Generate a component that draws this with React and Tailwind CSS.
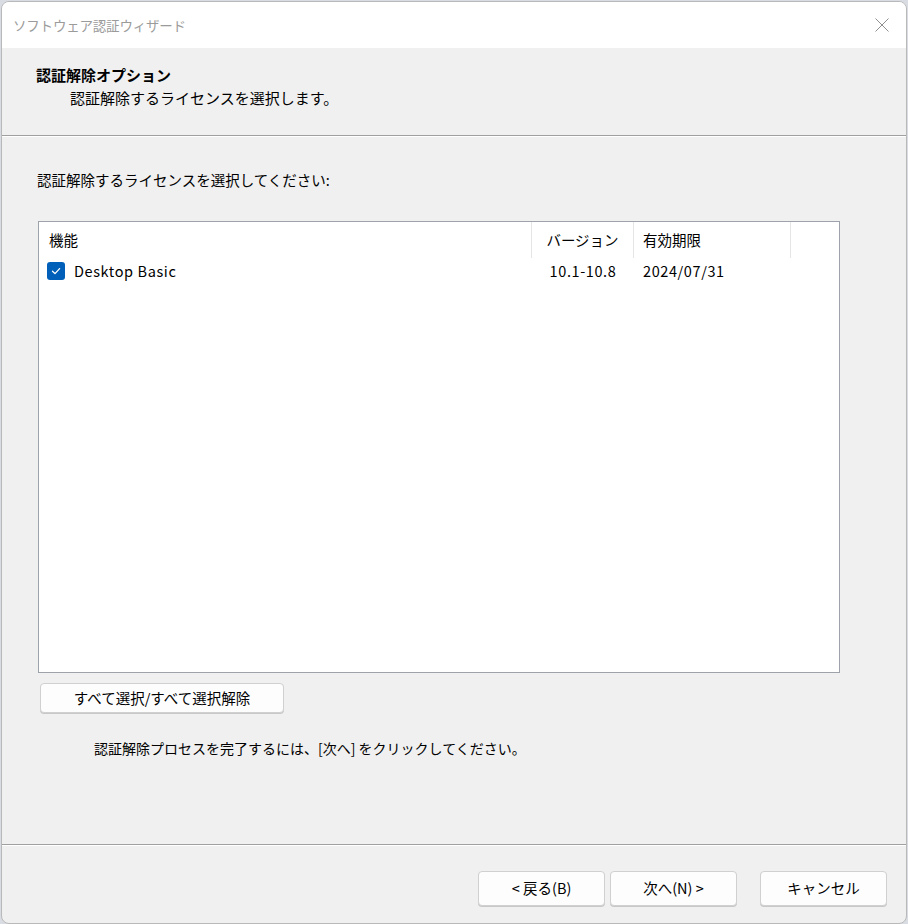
const font = { fontFamily: '"Noto Sans CJK JP", "Noto Sans", sans-serif' };

const DialogButton = ({ label, className = '' }) => (
  <button
    className={`h-[35px] w-[127px] rounded-[4px] border border-[#d0d0d0] bg-[#fdfdfd] text-[14.5px] leading-none text-black shadow-[0_1px_0_#c8c8c8] ${className}`}
  >
    {label}
  </button>
);

const Separator = () => (
  <div className="h-[2px] border-t border-[#a0a0a0] border-b border-b-white" />
);

export default function App() {
  return (
    <div
      className="w-[908px] h-[924px] bg-[#d9dde3] pl-[1px] pt-[1px] overflow-hidden"
      style={font}
    >
      <div className="w-[906px] h-[923px] rounded-[8px] border border-[#b9b9b9] overflow-hidden flex flex-col bg-[#f0f0f0]">
        {/* Title bar */}
        <div className="h-[46px] bg-white flex items-center justify-between pl-[11px] pr-[16px] shrink-0">
          <span className="text-[13.5px] text-[#9b9b9b] tracking-[-0.2px]">ソフトウェア認証ウィザード</span>
          <svg width="14" height="14" viewBox="0 0 14 14" fill="none" className="mr-[1px]">
            <path d="M0.5 0.5 L13.5 13.5 M13.5 0.5 L0.5 13.5" stroke="#8f8f8f" strokeWidth="1" />
          </svg>
        </div>

        {/* Header */}
        <div className="h-[87px] pl-[34px] pt-[17px] shrink-0 text-black">
          <div className="text-[15px] font-bold leading-[20px]">認証解除オプション</div>
          <div className="pl-[34px] mt-[3px] text-[15px] leading-[20px]">認証解除するライセンスを選択します。</div>
        </div>
        <Separator />

        {/* Content */}
        <div className="pl-[36px] pt-[33px] text-black">
          <div className="text-[14.5px] leading-[20px] -ml-[1px]">認証解除するライセンスを選択してください:</div>

          <div className="mt-[31px] w-[802px] h-[452px] border border-[#9ea3ab] bg-white">
            {/* Column headers */}
            <div className="flex h-[36px] text-[14.5px]">
              <div className="w-[493px] pl-[10px] flex items-center border-r border-[#e5e5e5]">機能</div>
              <div className="w-[102px] flex items-center justify-center border-r border-[#e5e5e5]">バージョン</div>
              <div className="w-[157px] pl-[9px] flex items-center border-r border-[#e5e5e5]">有効期限</div>
              <div className="flex-1" />
            </div>
            {/* Row */}
            <div className="flex h-[26px] text-[14.5px] tracking-[0.6px]">
              <div className="w-[493px] pl-[8px] flex items-center gap-[9px]">
                <span className="w-[18px] h-[18px] rounded-[3px] bg-[#005fb8] flex items-center justify-center">
                  <svg width="12" height="12" viewBox="0 0 12 12" fill="none">
                    <path d="M2.5 6.2 L5 8.6 L9.6 3.6" stroke="white" strokeWidth="1.3" strokeLinecap="round" strokeLinejoin="round" />
                  </svg>
                </span>
                <span>Desktop Basic</span>
              </div>
              <div className="w-[102px] flex items-center justify-center">10.1-10.8</div>
              <div className="w-[157px] pl-[9px] flex items-center">2024/07/31</div>
            </div>
          </div>

          <button className="mt-[10px] ml-[2px] h-[30px] w-[244px] rounded-[4px] border border-[#d0d0d0] bg-[#fdfdfd] text-[14.5px] leading-none shadow-[0_1px_0_#c8c8c8]">
            すべて選択/すべて選択解除
          </button>

          <div className="mt-[25px] pl-[56px] text-[14px] leading-[20px]">
            認証解除プロセスを完了するには、[次へ] をクリックしてください。
          </div>
        </div>

        <div className="flex-1" />
        <Separator />

        {/* Footer buttons */}
        <div className="h-[77px] shrink-0 flex items-start justify-end pr-[19px] pt-[25px]">
          <DialogButton label="< 戻る(B)" />
          <DialogButton label="次へ(N) >" className="ml-[5px]" />
          <DialogButton label="キャンセル" className="ml-[23px]" />
        </div>
      </div>
    </div>
  );
}
